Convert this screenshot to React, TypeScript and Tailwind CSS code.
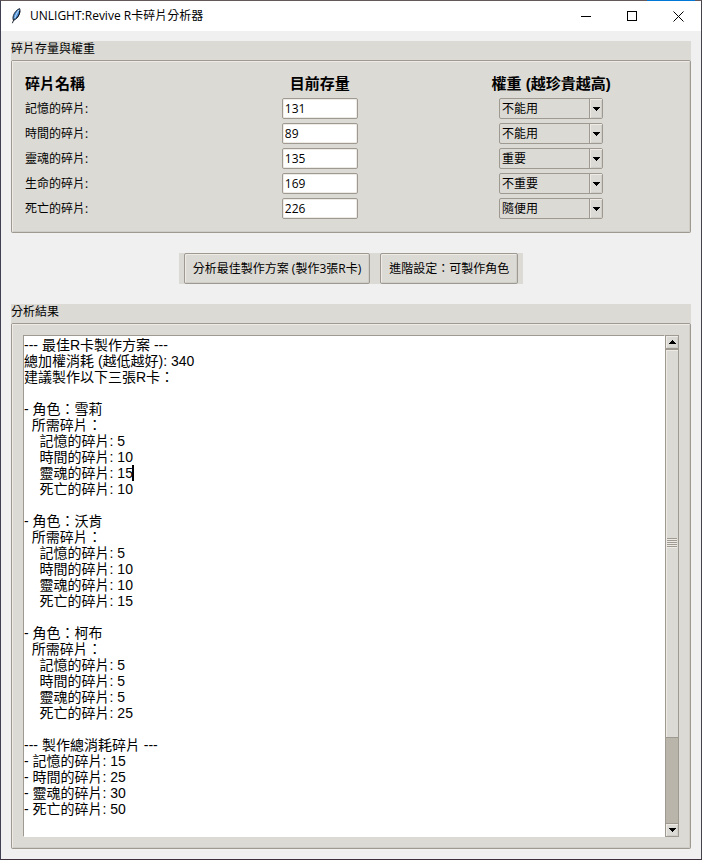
import { useState } from "react";

const UI_FONT = "font-['Open_Sans','Noto_Sans_CJK_TC',sans-serif]";
const BODY_FONT = "font-['Liberation_Sans','Noto_Sans_CJK_TC',sans-serif]";

const LEVELS = ["不能用", "重要", "不重要", "隨便用"];

const FRAGMENTS = [
  { id: "memory", name: "記憶的碎片", stock: "131", weight: "不能用" },
  { id: "time", name: "時間的碎片", stock: "89", weight: "不能用" },
  { id: "soul", name: "靈魂的碎片", stock: "135", weight: "重要" },
  { id: "life", name: "生命的碎片", stock: "169", weight: "不重要" },
  { id: "death", name: "死亡的碎片", stock: "226", weight: "隨便用" },
];

const REPORT = `--- 最佳R卡製作方案 ---
總加權消耗 (越低越好): 340
建議製作以下三張R卡：

- 角色：雪莉
  所需碎片：
    記憶的碎片: 5
    時間的碎片: 10
    靈魂的碎片: 15
    死亡的碎片: 10

- 角色：沃肯
  所需碎片：
    記憶的碎片: 5
    時間的碎片: 10
    靈魂的碎片: 10
    死亡的碎片: 15

- 角色：柯布
  所需碎片：
    記憶的碎片: 5
    時間的碎片: 5
    靈魂的碎片: 5
    死亡的碎片: 25

--- 製作總消耗碎片 ---
- 記憶的碎片: 15
- 時間的碎片: 25
- 靈魂的碎片: 30
- 死亡的碎片: 50`;

function Feather() {
  return (
    <svg width="11" height="16" viewBox="0 0 11 16" aria-hidden="true">
      <path d="M8.6 0.6C6 1.6 3.4 4.4 2.4 7.6C1.8 9.6 1.8 11.2 2.6 12.4C4.8 11.4 7.2 9.2 8.3 6.2C9.2 3.8 9.2 1.8 8.6 0.6Z" fill="#4a90d9" stroke="#20242c" strokeWidth="1" />
      <path d="M7.8 2C6 4.6 4.6 7.4 3.8 10.4" stroke="#c4def5" strokeWidth="1" fill="none" />
      <path d="M8.7 3C8.8 5.4 7.6 8.2 5.2 10.6" stroke="#111820" strokeWidth="1" fill="none" />
      <path d="M3.2 10.6L1.4 15.2" stroke="#20242c" strokeWidth="1" fill="none" />
    </svg>
  );
}

function TitleBar() {
  return (
    <header className="flex h-[30px] shrink-0 items-center bg-white">
      <div className="flex flex-1 items-center gap-2 pl-[10px]">
        <Feather />
        <h1 className="text-xs leading-4">UNLIGHT:Revive R卡碎片分析器</h1>
      </div>
      <button aria-label="最小化" className="flex h-full w-[46px] items-center justify-center">
        <svg width="11" height="11" shapeRendering="crispEdges"><path d="M0 5.5H10" stroke="#000" /></svg>
      </button>
      <button aria-label="最大化" className="flex h-full w-[46px] items-center justify-center">
        <svg width="11" height="11" shapeRendering="crispEdges"><rect x="0.5" y="0.5" width="9" height="9" fill="none" stroke="#000" /></svg>
      </button>
      <button aria-label="關閉" className="flex h-full w-[46px] items-center justify-center">
        <svg width="11" height="11"><path d="M0.5 0.5L10.5 10.5M10.5 0.5L0.5 10.5" stroke="#000" /></svg>
      </button>
    </header>
  );
}

function Arrow({ up = false }: { up?: boolean }) {
  return (
    <svg width="7" height="4" shapeRendering="crispEdges" aria-hidden="true">
      <path d={up ? "M3 0h1v1h1v1h1v1h1v1H0V3h1V2h1V1h1z" : "M0 0h7v1H6v1H5v1H4v1H3V3H2V2H1V1H0z"} fill="#000" />
    </svg>
  );
}

function Panel({ title, grow = false, children }: { title: string; grow?: boolean; children: React.ReactNode }) {
  return (
    <section className={grow ? "flex flex-1 flex-col bg-[#dcdad5]" : "flex flex-col bg-[#dcdad5]"}>
      <h2 className="h-[19px] text-xs leading-4">{title}</h2>
      <div className="flex flex-1 flex-col rounded-[2px] border border-[#9e9a91]">
        <div className="flex flex-1 flex-col border border-t-[#eeebe7] border-l-[#eeebe7] border-r-[#cfcdc8] border-b-[#cfcdc8] p-[10px]">
          {children}
        </div>
      </div>
    </section>
  );
}

function FragmentTable() {
  return (
    <table className="w-full table-fixed border-collapse">
      <thead>
        <tr className={`h-6 text-[15px] leading-5 ${BODY_FONT}`}>
          <th scope="col" className="w-[29.5%] p-0 pl-[2px] text-left">碎片名稱</th>
          <th scope="col" className="w-[31.5%] p-0">目前存量</th>
          <th scope="col" className="p-0">權重 (越珍貴越高)</th>
        </tr>
      </thead>
      <tbody>
        {FRAGMENTS.map((f) => (
          <tr key={f.id} className="h-[25px]">
            <td className="p-0 pl-[2px]">
              <label htmlFor={f.id} className="block text-xs leading-4">{f.name}:</label>
            </td>
            <td className="p-0">
              <input
                id={f.id}
                defaultValue={f.stock}
                className="mx-auto block h-[21px] w-[76px] rounded-[2px] border border-[#9e9a91] bg-white px-[2px] text-xs leading-4 shadow-[inset_0_0_0_1px_#eeebe7] outline-none"
              />
            </td>
            <td className="p-0">
              <div className="relative mx-auto h-[21px] w-[104px]">
                <select
                  aria-label={`${f.name} 權重`}
                  defaultValue={f.weight}
                  className="block h-full w-full appearance-none rounded-[2px] border border-[#9e9a91] bg-[#dcdad5] px-[2px] text-xs leading-4 outline-none"
                >
                  {LEVELS.map((l) => (
                    <option key={l}>{l}</option>
                  ))}
                </select>
                <span className="pointer-events-none absolute inset-y-px right-px flex w-[13px] items-center justify-center border-l border-[#9e9a91] shadow-[inset_1px_1px_0_#eeebe7,inset_-1px_-1px_0_#cfcdc8]">
                  <Arrow />
                </span>
              </div>
            </td>
          </tr>
        ))}
      </tbody>
    </table>
  );
}

function ActionButton({ children }: { children: React.ReactNode }) {
  return (
    <button className="h-[31px] rounded-[2px] border border-[#9e9a91] bg-[#dcdad5] px-2 text-xs leading-4 whitespace-nowrap shadow-[inset_1px_1px_0_#eeebe7,inset_-1px_-1px_0_#cfcdc8]">
      {children}
    </button>
  );
}

function ScrollBar() {
  const box = "flex items-center justify-center border border-[#9e9a91] bg-[#dcdad5] shadow-[inset_1px_1px_0_#eeebe7,inset_-1px_-1px_0_#cfcdc8]";
  return (
    <div className="flex w-[14px] flex-col bg-[#bab5ab]">
      <button aria-label="向上捲動" className={`h-[14px] shrink-0 ${box}`}><Arrow up /></button>
      <div className="flex flex-1 flex-col border-x border-[#9e9a91]">
        <div className="flex h-[82%] items-center justify-center border-y border-[#9e9a91] bg-[#dcdad5] shadow-[inset_1px_1px_0_#eeebe7]">
          <div className="flex flex-col gap-px bg-[#eeebe7] pb-px">
            {[0, 1, 2, 3, 4].map((n) => (
              <span key={n} className="h-px w-[10px] bg-[#9e9a91]" />
            ))}
          </div>
        </div>
      </div>
      <button aria-label="向下捲動" className={`h-[14px] shrink-0 ${box}`}><Arrow /></button>
    </div>
  );
}

export default function App() {
  const [report, setReport] = useState(REPORT);
  return (
    <div className={`relative flex min-h-screen flex-col border border-t-[#645858] border-r-[#45424b] border-b-[#3d303d] border-l-[#3f4152] bg-[#f0f0f0] text-black ${UI_FONT}`}>
      <div className="absolute -top-px right-[6px] h-px w-12 bg-[#0078d7]" />
      <TitleBar />
      <main className="flex flex-1 flex-col gap-5 p-[10px]">
        <Panel title="碎片存量與權重">
          <FragmentTable />
        </Panel>
        <div className="flex gap-[10px] self-center bg-[#dcdad5] px-[5px]">
          <ActionButton>分析最佳製作方案 (製作3張R卡)</ActionButton>
          <ActionButton>進階設定：可製作角色</ActionButton>
        </div>
        <Panel title="分析結果" grow>
          <div className="flex flex-1">
            <div className="relative flex flex-1">
              <textarea
                aria-label="分析結果"
                rows={31}
                value={report}
                onChange={(e) => setReport(e.target.value)}
                className={`block flex-1 resize-none overflow-hidden border border-t-[#9e9a91] border-r-white border-b-white border-l-[#9e9a91] bg-white px-0 py-px text-sm leading-4 outline-none ${BODY_FONT}`}
              />
              <span className="absolute top-[130px] left-[109px] h-4 w-[2px] bg-black" />
            </div>
            <ScrollBar />
          </div>
        </Panel>
      </main>
    </div>
  );
}
